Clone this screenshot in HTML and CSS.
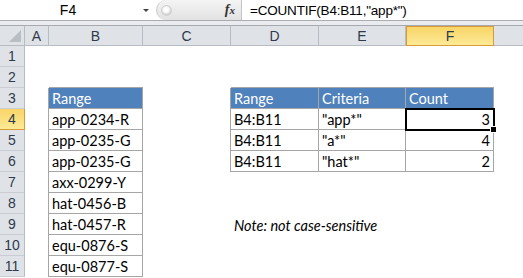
FILE: index.html
```html
<!DOCTYPE html>
<html>
<head>
<meta charset="utf-8">
<link rel="stylesheet" href="styles.css">
</head>
<body>
<div class="app">
  <div class="fbar">
    <div class="namebox"><span class="name">F4</span><span class="dd"></span></div>
    <div class="fxzone">
      <span class="knob"></span>
      <span class="fx"><i>f</i><i class="x">x</i></span>
    </div>
    <div class="formula">=COUNTIF(B4:B11,"app*")</div>
  </div>
  <div class="strip"></div>
  <div class="sheet">
    <div class="ch corner"><span class="tri"></span></div>
    <div class="ch">A</div><div class="ch">B</div><div class="ch">C</div><div class="ch">D</div><div class="ch">E</div><div class="ch sel">F</div><div class="ch last"></div>

    <div class="rh">1</div><div></div><div></div><div></div><div></div><div></div><div></div><div></div>
    <div class="rh">2</div><div></div><div class="eb"></div><div></div><div class="eb"></div><div class="eb"></div><div class="eb"></div><div></div>

    <div class="rh">3</div><div class="er"></div><div class="tc th">Range</div><div class="er"></div><div class="tc th">Range</div><div class="tc th">Criteria</div><div class="tc th">Count</div><div></div>
    <div class="rh hsel">4</div><div class="er"></div><div class="tc">app-0234-R</div><div class="er"></div><div class="tc">B4:B11</div><div class="tc">"app*"</div><div class="tc num active">3</div><div></div>
    <div class="rh">5</div><div class="er"></div><div class="tc">app-0235-G</div><div class="er"></div><div class="tc">B4:B11</div><div class="tc">"a*"</div><div class="tc num">4</div><div></div>
    <div class="rh">6</div><div class="er"></div><div class="tc">app-0235-G</div><div class="er"></div><div class="tc">B4:B11</div><div class="tc">"hat*"</div><div class="tc num">2</div><div></div>
    <div class="rh">7</div><div class="er"></div><div class="tc">axx-0299-Y</div><div></div><div></div><div></div><div></div><div></div>
    <div class="rh">8</div><div class="er"></div><div class="tc">hat-0456-B</div><div></div><div></div><div></div><div></div><div></div>
    <div class="rh">9</div><div class="er"></div><div class="tc">hat-0457-R</div><div></div><div class="note">Note: not case-sensitive</div><div></div>
    <div class="rh">10</div><div class="er"></div><div class="tc">equ-0876-S</div><div></div><div></div><div></div><div></div><div></div>
    <div class="rh">11</div><div class="er"></div><div class="tc">equ-0877-S</div><div></div><div></div><div></div><div></div><div></div>
  </div>
</div>
</body>
</html>
```
FILE: styles.css
```css
* { box-sizing: border-box; }
html, body { margin: 0; padding: 0; background: #fff; }
body { font-family: Lato, "Open Sans", "Liberation Sans", sans-serif; font-size: 14.5px; color: #000; overflow: hidden; }
.app { width: 523px; height: 278px; overflow: hidden; }

.fbar { height: 21px; display: flex; border-bottom: 1px solid #a9acb0; background: #fff; }
.namebox { width: 156px; display: flex; align-items: center; position: relative; }
.name { width: 136px; text-align: center; font-family: "Liberation Sans", sans-serif; font-size: 14px; }
.dd { width: 0; height: 0; border-left: 3px solid transparent; border-right: 3px solid transparent; border-top: 3px solid #444; margin-left: 7px; }
.fxzone { width: 86px; background: linear-gradient(#f4f4f4, #e2e2e2); border-radius: 10px 0 0 10px; border-left: 1px solid #c9c9c9; border-right: 1px solid #c4c4c4; display: flex; align-items: center; justify-content: space-between; padding: 0 6px 0 4px; }
.knob { width: 11px; height: 11px; border-radius: 50%; background: radial-gradient(circle at 45% 40%, #fff 0 30%, #d3d3d3 70%); border: 1px solid #d0d0d0; }
.fx { font-family: "Liberation Serif", serif; font-style: italic; font-weight: bold; font-size: 14px; color: #333; }
.fx .x { font-size: 11px; }
.formula { flex: 1; padding-left: 8px; display: flex; align-items: center; font-family: "Liberation Sans", sans-serif; font-size: 13.5px; letter-spacing: -0.2px; }

.strip { height: 5px; background: #e9ebee; border-bottom: 1px solid #a6aab0; }

.sheet { display: grid; grid-template-columns: 25px 24px 94px 88px 88px 87px 88px 1fr; grid-template-rows: 20px repeat(11, 21px); }
.ch { background: #dfe3e8; border-right: 1px solid #b7bcc3; border-bottom: 1px solid #b7bcc3; display: flex; align-items: center; justify-content: center; color: #2f3a4a; font-family: "Liberation Sans", sans-serif; font-size: 14px; }
.ch.last { border-right: none; }
.corner { position: relative; }
.tri { position: absolute; right: 3px; bottom: 3px; width: 0; height: 0; border-left: 12px solid transparent; border-bottom: 12px solid #b9bdc4; }
.ch.sel { background: linear-gradient(#f8d568, #feea96); border: 1px solid #d99b3a; border-top: 1px solid #d99b3a; }
.rh { background: #dfe3e8; border-right: 1px solid #b7bcc3; border-bottom: 1px solid #c9cdd3; display: flex; align-items: center; justify-content: center; color: #2f3a4a; font-family: "Liberation Sans", sans-serif; font-size: 14px; }
.rh.hsel { background: linear-gradient(#f8d568, #feea96); border-color: #d99b3a; }

.tc { border-right: 1px solid #a6a6a6; border-bottom: 1px solid #a6a6a6; display: flex; align-items: flex-end; padding: 0 3px 1px 3px; white-space: nowrap; }
.th { background: #4f81bd; color: #fff; }
.num { justify-content: flex-end; }
.active { position: relative; }
.active::after { content: ""; position: absolute; left: -1px; top: -1px; right: -2px; bottom: -2px; border: 2px solid #000; }
.active::before { content: ""; position: absolute; right: -4px; bottom: -4px; width: 5px; height: 5px; background: #000; border: 1px solid #fff; z-index: 2; }
.er { border-right: 1px solid #a6a6a6; }
.eb { border-bottom: 1px solid #a6a6a6; }
.note { grid-column: span 3; font-style: italic; display: flex; align-items: flex-end; padding: 0 0 1px 3px; white-space: nowrap; }
```
